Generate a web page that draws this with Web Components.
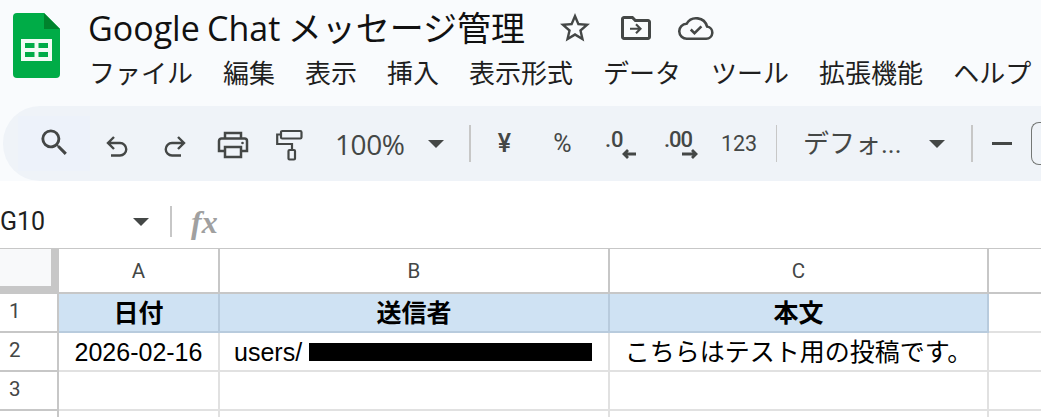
<!DOCTYPE html>
<html lang="ja"><head><meta charset="utf-8"><title>Google Chat メッセージ管理</title>
<style>
html,body{margin:0;padding:0}
body{width:1041px;height:417px;overflow:hidden;background:#fff;font-family:Roboto,"Noto Sans CJK JP",sans-serif;display:flex;flex-direction:column}
</style></head><body>
<doc-header></doc-header>
<tool-bar></tool-bar>
<formula-bar></formula-bar>
<sheet-grid></sheet-grid>
<script>
const def=(name,css,html)=>customElements.define(name,class extends HTMLElement{
  constructor(){super();const r=this.attachShadow({mode:'open'});r.innerHTML=`<style>${css}</style>${typeof html==='function'?html(this):html}`;}
});
const ic='#444746';
def('doc-header',`
:host{display:grid;grid-template-columns:88px 1fr;height:106px;background:#f9fbfd;flex:none}
.logo{padding:13px 0 0 13px}
.main{display:flex;flex-direction:column}
.title{display:flex;align-items:center;height:55px;color:#1f1f1f}
.name{font:34px/40px "Open Sans","Noto Sans CJK JP",sans-serif;word-spacing:-1.500px;white-space:nowrap;width:469px;color:#111}
.title svg{flex:none;display:block}
.menu{display:flex;gap:30px;margin-left:1px;font:26px/32px Roboto,"Noto Sans CJK JP",sans-serif;color:#1f1f1f;white-space:nowrap;margin-top:3px}
`,`
<div class="logo"><svg width="47" height="65" viewBox="0 0 47 65"><path d="M4 0H31L47 16V61a4 4 0 0 1-4 4H4a4 4 0 0 1-4-4V4a4 4 0 0 1 4-4z" fill="#00ac47"/><path d="M31 0L47 16H31z" fill="#00832d"/><path fill-rule="evenodd" fill="#fff" d="M8 26H39V48H8zM12 30V35H21.500V30zM25.500 30V35H35V30zM12 39V44H21.500V39zM25.500 39V44H35V39z" opacity=".95"/></svg></div>
<div class="main"><div class="title"><div class="name">Google Chat メッセージ管理</div>
<svg width="36" height="36" viewBox="0 0 24 24" fill="${ic}"><path d="M22 9.240l-7.190-.62L12 2 9.190 8.630 2 9.240l5.460 4.730L5.820 21 12 17.270 18.180 21l-1.630-7.030L22 9.240zM12 15.400l-3.760 2.270 1-4.280-3.320-2.880 4.380-.38L12 6.100l1.710 4.040 4.380.38-3.320 2.880 1 4.280L12 15.400z"/></svg>
<svg style="margin-left:25px" width="36" height="36" viewBox="0 0 24 24" fill="${ic}"><path d="M20 6h-8l-2-2H4c-1.100 0-2 .9-2 2v12c0 1.100.9 2 2 2h16c1.100 0 2-.9 2-2V8c0-1.100-.9-2-2-2zm0 12H4V6h5.170l2 2H20v10z"/><path d="M12.500 9.500l-1 1 1.800 1.800H8v1.400h5.300l-1.800 1.800 1 1 3.500-3.500z" transform="translate(0 -.5)"/></svg>
<svg style="margin-left:24px" width="36" height="36" viewBox="0 0 24 24" fill="none" stroke="${ic}" stroke-width="1.700"><path d="M6 19.200h12.800a4.100 4.100 0 0 0 .6-8.150A7.500 7.500 0 0 0 5.700 9.200 5 5 0 0 0 6 19.200z"/><path d="M8.500 13l2.500 2.500 4.600-4.600"/></svg>
</div>
<div class="menu"><span>ファイル</span><span>編集</span><span>表示</span><span>挿入</span><span>表示形式</span><span>データ</span><span>ツール</span><span>拡張機能</span><span>ヘルプ</span></div></div>`);

const caret=`<svg width="16" height="8" viewBox="0 0 16 8"><path d="M0 0h16L8 8z" fill="${ic}"/></svg>`;
def('tool-bar',`
:host{display:block;flex:none;background:#f9fbfd;padding:0 0 0 3px}
.bar{display:flex;align-items:center;height:75px;background:#eff3f8;border-radius:37px 0 0 37px;overflow:hidden}
.search{flex:none;display:flex;align-items:center;justify-content:center;width:72px;height:55px;margin:0 -2px 0 15px;background:#edf2fa;padding-bottom:3px;box-sizing:border-box}
.sep{flex:none;width:1.500px;height:37px;background:#c7c7c7}
.t{flex:none;text-align:center;color:${ic};white-space:nowrap}
svg{display:block;flex:none}
.sl{flex:none;display:flex;align-items:center;justify-content:center;box-sizing:border-box}
.box{flex:none;width:40px;height:43px;border:1.500px solid #747775;border-radius:8px 0 0 8px;border-right:0;box-sizing:border-box}
`,`<div class="bar">
<div class="search"><svg width="35" height="35" viewBox="0 0 24 24" fill="${ic}"><path d="M15.500 14h-.79l-.28-.27A6.471 6.471 0 0 0 16 9.500 6.500 6.500 0 1 0 9.500 16c1.610 0 3.090-.59 4.230-1.570l.27.28v.79l5 4.990L20.490 19l-4.990-5zm-6 0C7.010 14 5 11.990 5 9.500S7.010 5 9.500 5 14 7.010 14 9.500 11.990 14 9.500 14z"/></svg></div>
<div class="sl" style="width:58px;padding-top:5px"><svg width="24" height="22" viewBox="0 0 24 22" fill="none" stroke="${ic}" stroke-width="2.400"><path d="M9 2L3 8l6 6M3 8h12a6.200 6.200 0 0 1 0 12.500H6"/></svg></div>
<div class="sl" style="width:58px;padding-top:5px"><svg width="24" height="22" viewBox="0 0 24 22" fill="none" stroke="${ic}" stroke-width="2.400"><path d="M15 2l6 6-6 6M21 8H9a6.200 6.200 0 0 0 0 12.500H18"/></svg></div>
<div class="sl" style="width:58px;padding-top:3px"><svg width="32" height="28" viewBox="0 0 32 28" fill="none" stroke="${ic}" stroke-width="2.500"><path d="M8 8V2h16v6M8 20H2V10a2.500 2.500 0 0 1 2.500-2.500h23A2.500 2.500 0 0 1 30 10v10h-6"/><path d="M8 16h16v10H8z"/><circle cx="25.500" cy="12" r="1.300" fill="${ic}" stroke="none"/></svg></div>
<div class="sl" style="width:58px;padding:2px 3px 0 0"><svg width="27" height="32" viewBox="0 0 27 32" fill="none" stroke="${ic}" stroke-width="2.200"><rect x="5" y="2" width="20.500" height="7.500" rx="1.300"/><path d="M5 5.500H1.200V15H16v6"/><rect x="12.500" y="21" width="6.500" height="9.500" rx="1"/></svg></div>
<div class="t" style="width:69px;margin-left:15px;font:28px/32px 'Open Sans',Roboto,sans-serif;letter-spacing:-.4px">100%</div>
<div class="sl" style="width:64px">${caret}</div>
<div class="sep" style="margin-left:1px"></div>
<div class="t" style="width:66px;margin-left:1px;font:500 25px/28px Roboto,sans-serif">¥</div>
<div class="t" style="width:52px;margin-left:-1px;font:25px/28px Roboto,sans-serif">%</div>
<div class="sl" style="width:62px;margin-left:1px"><svg width="36" height="36" viewBox="0 0 36 36"><text x="2" y="21" font-family="Roboto" font-size="22" font-weight="500" fill="${ic}">.0</text><path d="M33 28H21m4-4l-4 4 4 4" fill="none" stroke="${ic}" stroke-width="2.800"/></svg></div>
<div class="sl" style="width:61.500px"><svg width="36" height="36" viewBox="0 0 36 36"><text x="0" y="21" font-family="Roboto" font-size="22" font-weight="500" fill="${ic}" letter-spacing="-1">.00</text><path d="M18 28h14m-4-4l4 4-4 4" fill="none" stroke="${ic}" stroke-width="2.800"/></svg></div>
<div class="t" style="width:52px;font:21.500px/28px Roboto,sans-serif">123</div>
<div class="sep" style="margin-left:10.500px"></div>
<div class="t" style="width:101px;margin-left:26px;font:26px/32px Roboto,'Noto Sans CJK JP',sans-serif;text-align:left">デフォ...</div>
<div class="sl" style="width:66px">${caret}</div>
<div class="sep" style="margin-left:1px"></div>
<div class="sl" style="width:58px"><svg width="20" height="3"><rect width="20" height="3" fill="${ic}"/></svg></div>
<div class="box"></div>
</div>`);

def('formula-bar',`
:host{display:flex;align-items:center;flex:none;height:53px;margin-top:14px;background:#fff;box-sizing:border-box}
.ref{width:133px;font:25px/32px Roboto,sans-serif;color:#1f1f1f;flex:none}
.sep{width:2px;height:31px;background:#c7c7c7;flex:none;margin-left:21px}
.fx{margin-left:19px;font:italic 700 32px/32px "Liberation Serif",serif;color:#a0a0a0}
svg{display:block;flex:none}
`,`<div class="ref">G10</div>${caret}<div class="sep"></div><div class="fx">fx</div>`);

def('sheet-cell',`
:host{display:flex;align-items:center;justify-content:center;box-sizing:border-box;border-right:2px solid #e1e1e1;border-bottom:2px solid #e1e1e1;font:25px/30px "Liberation Sans","Noto Sans CJK JP",sans-serif;color:#000;white-space:nowrap;overflow:hidden;min-width:0}
:host([kind=col]){border-right-color:#c7c7c7;border-bottom-color:#c7c7c7;font:20.500px/24px Roboto,sans-serif;color:#444746}
:host([kind=row]){justify-content:flex-start;padding-left:9px;border-right-color:#c7c7c7;border-bottom-color:#c7c7c7;font:20.500px/24px Roboto,sans-serif;color:#444746;padding-bottom:3px}
:host([kind=corner]){background:#f8f9fa;border-right:8.500px solid #c7c7c7;border-bottom:8px solid #c7c7c7}
:host([kind=head]){background:#cfe2f3;font-weight:700;border-right-color:#b8cbdd;border-bottom-color:#b8cbdd}
:host([align=left]){justify-content:flex-start;padding-left:14px}
`,`<slot></slot>`);

def('sheet-grid',`
:host{display:grid;flex:1;min-height:0;grid-template-columns:59px 161px 390px 379px 1fr;grid-template-rows:45px 39px 39px 39px 39px;border-top:1.500px solid #c7c7c7;background:#fff;overflow:hidden}
.blk{display:inline-block;width:283px;height:18px;background:#000;vertical-align:-2px}
`,`
<sheet-cell kind="corner"></sheet-cell><sheet-cell kind="col">A</sheet-cell><sheet-cell kind="col">B</sheet-cell><sheet-cell kind="col">C</sheet-cell><sheet-cell kind="col" style="border-right:0"></sheet-cell>
<sheet-cell kind="row">1</sheet-cell><sheet-cell kind="head">日付</sheet-cell><sheet-cell kind="head">送信者</sheet-cell><sheet-cell kind="head">本文</sheet-cell><sheet-cell style="border-right:0"></sheet-cell>
<sheet-cell kind="row">2</sheet-cell><sheet-cell>2026-02-16</sheet-cell><sheet-cell align="left">users/&nbsp;<span class="blk"></span></sheet-cell><sheet-cell>こちらはテスト用の投稿です。</sheet-cell><sheet-cell style="border-right:0"></sheet-cell>
<sheet-cell kind="row">3</sheet-cell><sheet-cell></sheet-cell><sheet-cell></sheet-cell><sheet-cell></sheet-cell><sheet-cell style="border-right:0"></sheet-cell>
<sheet-cell kind="row"></sheet-cell><sheet-cell></sheet-cell><sheet-cell></sheet-cell><sheet-cell></sheet-cell><sheet-cell style="border-right:0"></sheet-cell>`);
</script>
</body></html>
